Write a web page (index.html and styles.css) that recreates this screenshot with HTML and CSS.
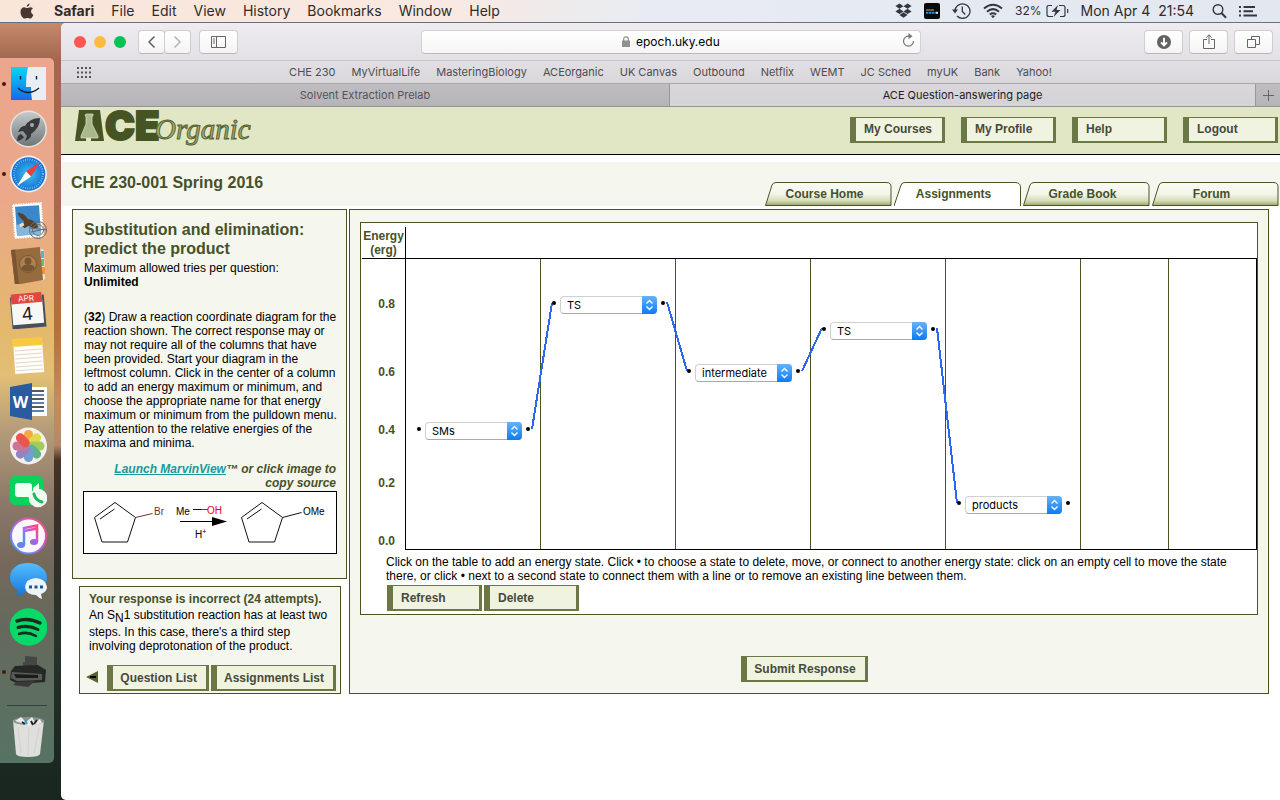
FILE: index.html
```html
<!DOCTYPE html>
<html lang="en">
<head>
<meta charset="utf-8">
<title>ACE Question-answering page</title>
<link rel="stylesheet" href="styles.css">
</head>
<body>
<header class="menubar">
  <svg class="apple" width="14" height="16" viewBox="0 0 14 16" aria-label="Apple"><path fill="#4a3630" d="M9.6 0.4c0.1 1.7-1.3 3.3-2.9 3.3C6.500 2.200 8 0.600 9.600 0.400zM12.900 5.400c-1.300 0.800-1.900 1.800-1.800 3.100 0 1.500 0.900 2.600 2.300 3.200-0.600 1.800-1.800 3.800-3.200 3.800-1 0-1.500-0.600-2.700-0.600s-1.700 0.600-2.700 0.600C2.700 15.500 0.500 12 0.500 8.900c0-3 1.900-4.600 3.700-4.600 1.200 0 2.200 0.800 2.900 0.800s1.900-0.900 3.300-0.900c1 0 1.900 0.400 2.500 1.200z"/></svg>
  <nav class="menus"><b>Safari</b><span>File</span><span>Edit</span><span>View</span><span>History</span><span>Bookmarks</span><span>Window</span><span>Help</span></nav>
  <div class="status">
    <svg width="17" height="16" viewBox="0 0 17 16" fill="#333840"><path d="M4.500 0.500L8.500 3.200 4.400 5.800 0.400 3.100zM12.500 0.500L8.500 3.200l4.100 2.600 4-2.700zM0.400 8.500l4-2.700 4.100 2.600-4 2.600zM16.600 8.500l-4-2.700-4.100 2.600 4 2.600zM4.500 12l4-2.700 4 2.700-4 2.700z"/></svg>
    <svg width="16" height="16" viewBox="0 0 16 16"><rect width="16" height="16" rx="2" fill="#07090b"/><path d="M2 7h8" stroke="#777" stroke-width="1.500"/><path d="M2 9.800h9" stroke="#1496e0" stroke-width="2" stroke-dasharray="2.500 .5"/><path d="M11.500 9.800h2.500" stroke="#ddd" stroke-width="2"/></svg>
    <svg width="19" height="16" viewBox="0 0 19 16" fill="none" stroke="#333840"><path stroke-width="1.300" d="M3 8.500A7.500 7.200 0 1 1 5 13"/><path d="M0 6.500h6L3 10.500z" fill="#333840" stroke="none"/><path stroke-width="1.300" d="M10.300 3.500v5l3 3"/></svg>
    <svg width="20" height="16" viewBox="0 0 20 16" fill="none" stroke="#333840" stroke-width="2"><path d="M1 5.500Q10-2 19 5.500M4 8.700Q10 3.500 16 8.700M6.800 11.500Q10 9 13.200 11.500"/><path d="M8 13l2 2.300 2-2.300q-2-1.500-4 0z" fill="#333840" stroke="none"/></svg>
    <span class="battery"><small>32%</small>
    <svg width="23" height="14" viewBox="0 0 23 14" fill="none" stroke="#333840" stroke-width="1.200"><path d="M6 1.500H3Q1 1.500 1 3.500v7q0 2 2 2h4M13 1.500h4q2 0 2 2v7q0 2-2 2h-3"/><path d="M21.700 5v4"/><path d="M12 1L5.500 7.700h4L7.500 13l7-7h-4z" fill="#333840" stroke="none"/></svg></span>
    <time>Mon Apr 4&nbsp; 21:54</time>
    <svg width="15" height="16" viewBox="0 0 15 16" fill="none" stroke="#333840"><circle cx="6" cy="6.500" r="4.800" stroke-width="1.400"/><path d="M9.500 10l4.500 4.700" stroke-width="2"/></svg>
    <svg width="18" height="14" viewBox="0 0 18 14" stroke="#333840" stroke-width="2"><path d="M4.500 3H16M4.500 7.200H14M4.500 11.500H18M0 3h2M0 7.200h2M0 11.500h2"/></svg>
  </div>
</header>
<div class="desktop">
  <aside class="dock" aria-label="Dock">
    <ul class="apps">
      <li class="running"><svg viewBox="0 0 38 38"><defs><linearGradient id="fa" x2="0" y2="1"><stop stop-color="#08d4fb"/><stop offset="1" stop-color="#1769e8"/></linearGradient></defs><path fill="url(#fa)" d="M2 2h35v33H2z"/><path fill="#e9eef4" d="M18.500 2H37v33H23q-1-5-1-13h-5Q17 10 19 2z"/><path d="M11.500 11v3.500M27.500 11v3.500M9 23q10 9 21 0" fill="none" stroke="#102030" stroke-width="1.400"/></svg></li>
      <li><svg viewBox="0 0 38 38"><defs><linearGradient id="la" x2="0" y2="1"><stop stop-color="#c5c9c9"/><stop offset="1" stop-color="#707778"/></linearGradient></defs><circle cx="19.500" cy="19" r="18.500" fill="#e4e4e2"/><circle cx="19.500" cy="19" r="17" fill="url(#la)"/><path fill="#37383a" d="M31 8q-10 0-15 8-4-1-7 6l5-1 4 5-2 5q7-3 6-7 9-6 9-16zM12 24q-4 1-4 7 5-1 7-4z"/><circle cx="23" cy="15" r="2" fill="#aaa"/></svg></li>
      <li class="running"><svg viewBox="0 0 38 38"><defs><radialGradient id="sa"><stop stop-color="#3ac5ef"/><stop offset="1" stop-color="#176dd3"/></radialGradient></defs><circle cx="19.500" cy="19" r="18.500" fill="#edf0f1"/><circle cx="19.500" cy="19" r="16.800" fill="url(#sa)"/><circle cx="19.500" cy="19" r="14.500" fill="none" stroke="#8ed7f4" stroke-width="2" stroke-dasharray=".7 1.600"/><path fill="#f43b35" d="M31 7L17 16.500l5 5z"/><path fill="#fff" d="M8 31l9-14.500 5 5z"/></svg></li>
      <li><svg viewBox="0 0 38 38"><g transform="rotate(-4 19 19)"><path fill="#fff" stroke="#fff" stroke-width="2" stroke-dasharray="1.500 1" d="M5 3h28v33H5z"/><path fill="#3c87c8" d="M7 5h24v29H7z"/><path fill="#83b7dd" d="M7 23h24v11H7z"/><path fill="#59402b" d="M9 11q6 0 10 7 8 2 10 9l-5 1-5-3-4 2-3-3 3-4q-5-4-6-9z"/><path fill="#e7dcc5" d="M10 23l4-2 1 3-4 2z"/></g><circle cx="29" cy="29" r="8.500" fill="none" stroke="#766e61"/><circle cx="29" cy="29" r="5.500" fill="none" stroke="#766e61"/><path stroke="#596b7b" d="M21 27l17 2M22 31l14-3"/></svg></li>
      <li><svg viewBox="0 0 38 38"><path fill="#e8e3d3" d="M30 2l5 2 1 29-3 2z"/><path fill="#4cb7dd" d="M32 5h3v7h-3z"/><path fill="#6ac168" d="M32 13h3v7h-3z"/><path fill="#ef9934" d="M33 21h3v7h-3z"/><path fill="#966b3e" d="M2 4l29-3 3 33-28 5z"/><path fill="#795532" d="M2 4l4-.5L10 38l-4 1z"/><circle cx="19" cy="18" r="8.500" fill="#ad8051" stroke="#795532"/><circle cx="19" cy="15" r="3.500" fill="#795532"/><path fill="#795532" d="M12 23q1-4 7-5 6 1 7 4-6 7-14 1z"/></svg></li>
      <li><svg viewBox="0 0 38 38"><g transform="rotate(-5 19 19)"><path fill="#44515c" d="M2 5h34v32H2z"/><path fill="#f7f7f5" d="M3 2h31v31H3z"/><path fill="#df4740" d="M3 2h31v10H3z"/><text x="18" y="10" class="cal-month">APR</text><text x="18" y="29" class="cal-day">4</text></g></svg></li>
      <li><svg viewBox="0 0 38 38"><g transform="rotate(-4 19 19)"><path fill="#fffef7" d="M5 3h29v34H5z"/><path fill="#f8ca40" d="M4 2h30v8H4z"/><path stroke="#ddd8ca" d="M6 14h27M6 18h27M6 22h27M6 26h27M6 30h27M6 34h27"/></g></svg></li>
      <li><svg viewBox="0 0 38 38"><path fill="#fff" d="M22 5h16v29H22z"/><path d="M23 9h12M23 17h12M23 25h12" stroke="#222" stroke-width="1.300"/><path d="M23 13h12M23 21h12M23 29h12" stroke="#2b5797" stroke-width="1.300"/><path fill="#2a5a9f" d="M1 5l22-4v37L1 34z"/><text x="11.500" y="26" class="word-letter">W</text></svg></li>
      <li><svg viewBox="0 0 38 38"><circle cx="19.500" cy="19" r="18.500" fill="#f2f1ed"/><g opacity=".9"><rect x="15" y="3" width="9" height="16" rx="4.500" fill="#f5a12c"/><rect x="15" y="3" width="9" height="16" rx="4.500" fill="#dfd83c" transform="rotate(45 19.500 19)"/><rect x="15" y="3" width="9" height="16" rx="4.500" fill="#9bc64d" transform="rotate(90 19.500 19)"/><rect x="15" y="3" width="9" height="16" rx="4.500" fill="#51ac83" transform="rotate(135 19.500 19)"/><rect x="15" y="3" width="9" height="16" rx="4.500" fill="#6695cf" transform="rotate(180 19.500 19)"/><rect x="15" y="3" width="9" height="16" rx="4.500" fill="#8a78b9" transform="rotate(225 19.500 19)"/><rect x="15" y="3" width="9" height="16" rx="4.500" fill="#ca658f" transform="rotate(270 19.500 19)"/><rect x="15" y="3" width="9" height="16" rx="4.500" fill="#e9453f" transform="rotate(315 19.500 19)"/></g></svg></li>
      <li><svg viewBox="0 0 38 38"><rect x="1" y="4" width="33" height="29" rx="5" fill="#0bd259"/><rect x="6" y="11" width="17" height="14" rx="3" fill="#effff4"/><path fill="#effff4" d="M24 16l6-5v14l-6-4z"/><circle cx="29" cy="26" r="9.300" fill="#f5f7f5"/><path fill="none" stroke="#12bf54" stroke-width="3" stroke-linecap="round" d="M25 22q1 6 8 8"/></svg></li>
      <li><svg viewBox="0 0 38 38"><defs><linearGradient id="ia" x1="1" x2="0" y2="1"><stop stop-color="#ff4b69"/><stop offset=".5" stop-color="#bb62e8"/><stop offset="1" stop-color="#29a7f6"/></linearGradient></defs><circle cx="19.500" cy="19" r="17.500" fill="#faf8fb" stroke="url(#ia)" stroke-width="2"/><path fill="none" stroke="url(#ia)" stroke-width="2.500" d="M15 28V11l13-2.500V25M15 14l13-2.500"/><ellipse cx="12" cy="28" rx="4" ry="3" fill="#6783ee"/><ellipse cx="25" cy="25" rx="4" ry="3" fill="#a065dc"/></svg></li>
      <li><svg viewBox="0 0 38 38"><defs><linearGradient id="ma" x2="0" y2="1"><stop stop-color="#55bdff"/><stop offset="1" stop-color="#1576db"/></linearGradient></defs><path fill="url(#ma)" d="M19 1C8 1 1 7 1 16q0 8 8 12-1 4-2 6 7-1 9-4 21 2 22-14C38 7 29 1 19 1z"/><path fill="#edf4f8" d="M27 16q-11 1-11 9 1 8 11 8 3 3 6 4l-1-5q6-2 6-7-1-8-11-9z"/><path stroke="#165394" stroke-width="3" stroke-dasharray="3 2.500" d="M20 25h15"/></svg></li>
      <li><svg viewBox="0 0 38 38"><circle cx="19.500" cy="19" r="18.800" fill="#08d968"/><path fill="none" stroke="#182b20" stroke-linecap="round" stroke-width="3.500" d="M8 13q11-4 23 2"/><path fill="none" stroke="#182b20" stroke-linecap="round" stroke-width="3" d="M9 19.500q10-3 20 2"/><path fill="none" stroke="#182b20" stroke-linecap="round" stroke-width="2.500" d="M10 26q8-3 17 2"/></svg></li>
      <li class="running"><svg viewBox="0 0 38 38"><path fill="#464645" d="M16 3l12 1v10H14V9h2z"/><path fill="#262727" d="M6 13l23-1 8 5-1 12-27 2-8-4 1-9z"/><path fill="#595a58" d="M3 19l30 2v6L8 28l-6-3z"/><path fill="#1a1b1b" d="M5 21l24 1v3L7 25z"/><path fill="#393a38" d="M8 29l18-1-7 6-15-2z"/></svg></li>
    </ul>
    <hr class="dock-rule">
    <svg class="trash" width="38" height="42" viewBox="0 0 38 42"><path fill="#dedfdd" d="M4 4h31l-4 34q-1 3-12 3T7 38z"/><ellipse cx="19.500" cy="5" rx="15.500" ry="4" fill="#8e918f"/><path fill="#ebeae6" d="M6 5l6-4 5 5 6-5 3 5 5-3 2 4-12 3z"/><path d="M13 6l3 2M22 5l2 4M28 4l-3 4" stroke="#222" stroke-width="2"/><path d="M16 4l2 4" stroke="#2a9fbf" stroke-width="2"/><path d="M9 12l3 26M20 12l-1 28M30 12l-5 26" stroke="#d0d2d0"/></svg>
  </aside>
  <main class="window">
    <div class="toolbar">
      <div class="controls">
        <div class="lights"><button class="red" aria-label="Close"></button><button class="yellow" aria-label="Minimize"></button><button class="green" aria-label="Zoom"></button></div>
        <div class="history"><button class="tool half" aria-label="Back"><svg width="9" height="14" viewBox="0 0 9 14"><path d="M7.500 1.500L2 7l5.500 5.500" fill="none" stroke="#606060" stroke-width="1.500"/></svg></button><button class="tool half" aria-label="Forward"><svg width="9" height="14" viewBox="0 0 9 14"><path d="M1.500 1.500L7 7l-5.500 5.500" fill="none" stroke="#b5b5b5" stroke-width="1.500"/></svg></button></div>
        <button class="tool" aria-label="Show sidebar"><svg width="15" height="12" viewBox="0 0 15 12" fill="none" stroke="#666"><path d="M.5.5h14v11H.5zM5.500.5v11M2 3h2M2 5h2M2 7h2"/></svg></button>
      </div>
      <div class="address"><label class="url"><svg width="8" height="11" viewBox="0 0 8 11"><path fill="#909090" d="M0 4.500h8V11H0z"/><path d="M1.700 5V3q0-2.200 2.300-2.200T6.300 3v2" fill="none" stroke="#909090" stroke-width="1.200"/></svg><input value="epoch.uky.edu" aria-label="Address"></label><button class="reload" aria-label="Reload"><svg width="13" height="15" viewBox="0 0 13 15"><path d="M7 3.200A5 5 0 1 0 11.500 8" fill="none" stroke="#777" stroke-width="1.200"/><path fill="#777" d="M6.500 0l4 3.200-4 3z"/></svg></button></div>
      <div class="actions">
        <button class="tool" aria-label="Downloads"><svg width="14" height="14" viewBox="0 0 14 14"><circle cx="7" cy="7" r="7" fill="#626262"/><path d="M7 2.800V10M4 7.300l3 3 3-3" fill="none" stroke="#fff" stroke-width="1.900"/></svg></button>
        <button class="tool" aria-label="Share"><svg width="12" height="15" viewBox="0 0 12 15" fill="none" stroke="#666"><path d="M4 5.500H.5v9h11v-9H8M6 10V1M3.200 3.500L6 .8l2.800 2.700"/></svg></button>
        <button class="tool" aria-label="Show all tabs"><svg width="13" height="12" viewBox="0 0 13 12" fill="none" stroke="#666"><path d="M.5 3.500h8v8h-8zM4.500 3V.5h8v8H9"/></svg></button>
      </div>
    </div>
    <div class="favorites">
      <svg class="grid-icon" width="14" height="11" viewBox="0 0 14 11" stroke="#555" stroke-width="2"><path stroke-dasharray="2 2" d="M0 1h14M0 5.500h14M0 10h14"/></svg>
      <nav class="links"><a href="#">CHE 230</a><a href="#">MyVirtualLife</a><a href="#">MasteringBiology</a><a href="#">ACEorganic</a><a href="#">UK Canvas</a><a href="#">Outbound</a><a href="#">Netflix</a><a href="#">WEMT</a><a href="#">JC Sched</a><a href="#">myUK</a><a href="#">Bank</a><a href="#">Yahoo!</a></nav>
    </div>
    <div class="browser-tabs"><button class="btab">Solvent Extraction Prelab</button><button class="btab current">ACE Question-answering page</button><button class="new-tab" aria-label="New tab"><svg width="11" height="11" viewBox="0 0 11 11"><path d="M5.500 0v11M0 5.500h11" stroke="#666"/></svg></button></div>

    <header class="site-head">
      <svg class="logo" width="184" height="46" viewBox="0 0 184 46" role="img" aria-label="ACE Organic">
        <path fill="#465322" d="M4 3h21l4 31H16V28H11V34H0z"/>
        <path fill="#abb78c" stroke="#e1e6c5" stroke-width=".7" d="M11 7h7v2h-1v8l6 12v2H6v-2l5-12V9h-1z"/>
        <text x="30" y="33" class="logo-main">CE</text>
        <text x="80" y="32" class="logo-script">Organic</text>
      </svg>
      <nav class="site-nav"><button class="btn wide">My Courses</button><button class="btn wide">My Profile</button><button class="btn wide">Help</button><button class="btn wide">Logout</button></nav>
    </header>
    <div class="course-bar">
      <h1>CHE 230-001 Spring 2016</h1>
      <svg class="defs" width="0" height="0" aria-hidden="true"><defs><linearGradient id="tabfill" x2="0" y2="1"><stop stop-color="#fafbf5"/><stop offset=".5" stop-color="#f3f5e8"/><stop offset=".8" stop-color="#d5dcb7"/><stop offset="1" stop-color="#9aa66a"/></linearGradient></defs></svg>
      <nav class="course-tabs">
        <a href="#"><svg viewBox="0 0 127 24"><path d="M.5 23.500L7 3Q8 .5 11 .5h110q5 0 5 4v19z" fill="url(#tabfill)" stroke="#4a5526"/></svg><span>Course Home</span></a>
        <a href="#"><svg viewBox="0 0 127 24"><path d="M0 24L7 3Q8 .5 11 .5h110q5 0 5.500 4V24" fill="#fff" stroke="#4a5526"/></svg><span>Assignments</span></a>
        <a href="#"><svg viewBox="0 0 127 24"><path d="M.5 23.500L7 3Q8 .5 11 .5h110q5 0 5 4v19z" fill="url(#tabfill)" stroke="#4a5526"/></svg><span>Grade Book</span></a>
        <a href="#"><svg viewBox="0 0 127 24"><path d="M.5 23.500L7 3Q8 .5 11 .5h110q5 0 5 4v19z" fill="url(#tabfill)" stroke="#4a5526"/></svg><span>Forum</span></a>
      </nav>
    </div>
    <div class="columns">
      <div class="side">
        <section class="question">
          <h2>Substitution and elimination: predict the product</h2>
          <p class="tries">Maximum allowed tries per question: <b>Unlimited</b></p>
          <p class="prompt">(<b>32</b>) Draw a reaction coordinate diagram for the reaction shown. The correct response may or may not require all of the columns that have been provided. Start your diagram in the leftmost column. Click in the center of a column to add an energy maximum or minimum, and choose the appropriate name for that energy maximum or minimum from the pulldown menu. Pay attention to the relative energies of the maxima and minima.</p>
          <p class="marvin"><a href="#">Launch MarvinView</a>™ or click image to copy source</p>
          <svg class="reaction" viewBox="0 0 252 61" role="img" aria-label="Reaction scheme">
            <defs><g id="ring" fill="none" stroke="#111"><path d="M31 10.500L10.500 25.500 18 50H43.500L51.500 25.500zM30.500 17L16 27"/></g></defs>
            <use href="#ring"/><use href="#ring" x="147"/>
            <path d="M51.500 25.500l17-4" stroke="#713036"/><text x="70" y="23" fill="#713036">Br</text>
            <text x="92" y="23">Me</text><path d="M109 17.500h8" stroke="#111"/><path d="M117 17.500h7" stroke="#e8001c"/><text x="123" y="22" fill="#e8001c">OH</text>
            <path d="M96 29.500h34" stroke="#000"/><path d="M128 25v9l15-4.500z"/>
            <text x="111" y="46">H<tspan dy="-4" font-size="7">+</tspan></text>
            <path d="M198.500 25.500l19-5" stroke="#111"/><text x="219" y="23">OMe</text>
          </svg>
        </section>
        <section class="feedback">
          <h3>Your response is incorrect (24 attempts).</h3>
          <p>An S<sub>N</sub>1 substitution reaction has at least two steps. In this case, there's a third step involving deprotonation of the product.</p>
          <div class="feedback-nav"><a href="#" aria-label="Previous question"><svg width="12" height="12" viewBox="0 0 12 12"><path fill="#59652f" d="M0 6L12 0v12z"/><path d="M4 6h6" stroke="#000" stroke-width="2"/></svg></a><div class="pair"><button class="btn">Question List</button><button class="btn">Assignments List</button></div></div>
        </section>
      </div>
      <section class="answer">
        <div class="diagram">
          <div class="chart">
            <div class="axis-title">Energy<br>(erg)</div><div class="chart-head"></div>
            <div class="scale"><span>0.8</span><span>0.6</span><span>0.4</span><span>0.2</span><span>0.0</span></div>
            <div class="plot">
              <i></i><i></i><i></i><i></i><i></i><i></i><i></i>
              <svg class="lines" width="675" height="290" viewBox="0 0 675 290" fill="none" stroke="#2c67f3" stroke-width="2" shape-rendering="crispEdges"><path d="M126 170L146 44M261 43L281 112M396 112L416 69M531 69L551 244"/></svg>
              <div class="state s1"><button aria-label="State 1 left"></button><label><select aria-label="State 1"><option>SMs</option></select><svg viewBox="0 0 15 18"><use href="#arrows"/></svg></label><button aria-label="State 1 right"></button></div>
              <div class="state s2"><button aria-label="State 2 left"></button><label><select aria-label="State 2"><option>TS</option></select><svg viewBox="0 0 15 18"><use href="#arrows"/></svg></label><button aria-label="State 2 right"></button></div>
              <div class="state s3"><button aria-label="State 3 left"></button><label><select aria-label="State 3"><option>intermediate</option></select><svg viewBox="0 0 15 18"><use href="#arrows"/></svg></label><button aria-label="State 3 right"></button></div>
              <div class="state s4"><button aria-label="State 4 left"></button><label><select aria-label="State 4"><option>TS</option></select><svg viewBox="0 0 15 18"><use href="#arrows"/></svg></label><button aria-label="State 4 right"></button></div>
              <div class="state s5"><button aria-label="State 5 left"></button><label><select aria-label="State 5"><option>products</option></select><svg viewBox="0 0 15 18"><use href="#arrows"/></svg></label><button aria-label="State 5 right"></button></div>
            </div>
          </div>
          <svg class="defs" width="0" height="0" aria-hidden="true"><defs><linearGradient id="blue" x2="0" y2="1"><stop stop-color="#67b2f8"/><stop offset="1" stop-color="#0a7cf6"/></linearGradient><g id="arrows"><path fill="url(#blue)" d="M0 0h11q4 0 4 4v10q0 4-4 4H0z"/><path fill="none" stroke="#fff" stroke-width="1.400" d="M4.500 7.500l3-3 3 3M4.500 10.500l3 3 3-3"/></g></defs></svg>
          <p class="help">Click on the table to add an energy state. Click • to choose a state to delete, move, or connect to another energy state: click on an empty cell to move the state there, or click • next to a second state to connect them with a line or to remove an existing line between them.</p>
          <div class="pair diagram-actions"><button class="btn wide">Refresh</button><button class="btn wide">Delete</button></div>
        </div>
        <button class="btn submit">Submit Response</button>
      </section>
    </div>
  </main>
</div>
</body>
</html>
```
FILE: styles.css
```css
* { box-sizing: border-box; }
body {
  margin: 0;
  min-height: 100vh;
  display: flex;
  flex-direction: column;
  font: 12px/14px "Liberation Sans", Arial, sans-serif;
  color: #000;
  background: linear-gradient(#c68b6c 22px, #a0684f 60px, #a96b4e 220px, #b5703c 330px, #c08d62 400px, #b48969 445px, #473425 460px, #35302a 530px, #25332b 640px, #19251f 800px);
}
h1, h2, h3, p, ul { margin: 0; padding: 0; }
button { font: inherit; color: inherit; border: 0; padding: 0; background: none; }
.defs { position: absolute; }

.menubar {
  display: flex;
  align-items: center;
  height: 23px;
  padding: 0 23px 0 20px;
  border-bottom: 1px solid #69707f;
  background: linear-gradient(90deg, #fae5d9, #f8e9e2 35%, #e8ecf2 50%, #e3e7f0);
  font: 14px/22px Inter, sans-serif;
  color: #302b2b;
}
.menus { display: flex; gap: 17px; margin-left: 20px; }
.status { display: flex; align-items: center; gap: 12px; margin-left: auto; }
.status time { margin-right: 6px; }
.battery { display: flex; align-items: center; gap: 4px; }
.battery small { font-size: 12px; }

.desktop { display: flex; flex: 1; }
.dock {
  display: flex;
  flex-direction: column;
  width: 54px;
  margin: 35px 7px 37px 0;
  padding: 7px 7px 5px 9px;
  border-radius: 0 5px 5px 0;
  background: linear-gradient(#eba68d, #eba88a 20%, #e4b86d 38%, #e2bf74 45%, #b39b79 53%, #8b7969 63%, #74685b 72%, #66695c 80%, #567364);
}
.apps { display: flex; flex: 1; flex-direction: column; justify-content: space-between; list-style: none; }
.apps li { position: relative; height: 38px; }
.apps svg { display: block; width: 38px; height: 38px; }
.running::before { content: ""; position: absolute; left: -7px; top: 17px; width: 4px; height: 4px; border-radius: 50%; background: #471a09; }
.dock-rule { width: 40px; margin: 14px 0 10px -2px; border: 0; border-top: 1px solid #30423a; }
.trash { display: block; }
.cal-month { font: 8px Inter, sans-serif; fill: #fff; text-anchor: middle; }
.cal-day { font: 18px Inter, sans-serif; fill: #222; text-anchor: middle; }
.word-letter { font: bold 16px "Open Sans", sans-serif; fill: #fff; text-anchor: middle; }

.window { flex: 1; min-width: 0; background: #fff; border-radius: 5px 0 0 5px; overflow: hidden; }
.toolbar {
  display: grid;
  grid-template-columns: 1fr minmax(0, 500px) 1fr;
  align-items: center;
  height: 38px;
  padding: 0 7px 0 13px;
  border-bottom: 1px solid #c8c5c9;
  background: linear-gradient(#eeecef, #e3e1e5);
}
.controls { display: flex; align-items: center; }
.lights { display: flex; gap: 8px; margin-right: 12px; }
.lights button { width: 12px; height: 12px; border-radius: 50%; }
.red { background: #fc5753; }
.yellow { background: #fdbc40; }
.green { background: #08c253; }
.history { display: flex; margin-right: 8px; }
.tool { display: flex; align-items: center; justify-content: center; width: 39px; height: 24px; border: 1px solid #cfcdd0; border-bottom-color: #b9b7ba; border-radius: 4px; background: linear-gradient(#fff, #f4f4f4); }
.tool.half { width: 27px; }
.half + .half { margin-left: -1px; }
.address { display: flex; align-items: center; height: 24px; margin: 0 3px 0 -3px; padding-right: 5px; border: 1px solid #d2d0d3; border-bottom-color: #bbb9bc; border-radius: 4px; background: linear-gradient(#fff, #f5f5f5); }
.url { display: flex; flex: 1; align-items: center; justify-content: center; gap: 6px; padding-left: 20px; }
.url input { width: 85px; padding: 0; border: 0; background: none; font: 12px/16px Inter, sans-serif; color: #000; }
.actions { display: flex; justify-content: flex-end; gap: 6px; }
.favorites { display: flex; align-items: center; height: 23px; padding: 0 16px; border-bottom: 1px solid #aaa8ab; background: linear-gradient(#e1dfe3, #d9d7da); }
.links { display: flex; flex: 1; justify-content: center; gap: 16px; margin-right: 14px; font: 11px/16px Inter, sans-serif; }
.links a { color: #504c50; text-decoration: none; }
.browser-tabs { display: grid; grid-template-columns: 608fr 587fr 24px; height: 23px; border-bottom: 1px solid #96949b; background: linear-gradient(#bfbdc1, #b6b4b8); font: 11px/20px Inter, sans-serif; color: #565358; }
.btab.current { background: linear-gradient(#d9d7db, #d5d3d7); color: #222; border: solid #99979b; border-width: 0 1px; }
.new-tab { display: flex; align-items: center; justify-content: center; }

.site-head { display: flex; align-items: center; justify-content: space-between; height: 48px; padding: 0 2px 2px 14px; border-bottom: 1px solid #000; background: #e1e6c5; }
.logo-main { font: 900 40px Inter, sans-serif; fill: #465322; stroke: #465322; stroke-width: 2px; }
.logo-script { font: italic 29px "Liberation Serif", serif; fill: #a2ac75; stroke: #56632f; stroke-width: 1px; }
.site-nav { display: flex; gap: 16px; }
.btn { height: 26px; padding: 0 9px 0 7px; border: solid #6b7745; border-width: 1px 3px 2px 6px; background: #eff3e0; color: #474a3b; font-weight: bold; text-align: left; white-space: nowrap; }
.btn.wide { width: 95px; padding-left: 8px; }
.course-bar { display: flex; align-items: flex-end; justify-content: space-between; height: 44px; margin: 7px 0 3px; padding: 0 1px 0 10px; background: #f5f6ee; }
.course-bar h1 { align-self: center; padding-bottom: 2px; font-size: 16px; line-height: 20px; color: #46512a; }
.course-tabs { display: flex; gap: 2px; }
.course-tabs a { display: grid; width: 127px; height: 24px; color: #46512a; font-weight: bold; text-align: center; text-decoration: none; }
.course-tabs svg, .course-tabs span { grid-area: 1 / 1; }
.course-tabs svg { width: 100%; height: 24px; }
.course-tabs span { z-index: 1; padding-right: 8px; line-height: 24px; }

.columns { display: flex; align-items: stretch; gap: 2px; padding: 0 11px; }
.side { display: flex; flex-direction: column; flex: 0 0 275px; }
.question { flex: 1; padding: 10px 9px 24px 11px; border: 1px solid #485421; background: #f5f6ee; }
.question h2 { margin-bottom: 3px; font-size: 16px; line-height: 19px; color: #46512a; }
.tries { max-width: 220px; }
.prompt { margin-top: 21px; }
.marvin { margin: 12px 1px 0 20px; text-align: right; font-weight: bold; font-style: italic; color: #46512a; }
.marvin a { color: #179a98; }
.reaction { display: block; width: 254px; height: 63px; margin: 1px 0 0 -1px; border: 1px solid #000; background: #fff; font-size: 10px; }
.feedback { margin: 7px 6px 0 7px; padding: 5px 4px 2px 9px; border: 1px solid #485421; background: #f5f6ee; }
.feedback h3 { font-size: 12px; line-height: 14px; color: #46512a; }
.feedback p { margin-top: 2px; }
.feedback sub { font-size: 12px; }
.feedback-nav { display: flex; align-items: center; justify-content: space-between; margin: 12px 0 0 -3px; }
.pair { display: flex; gap: 2px; }
.answer { display: flex; flex-direction: column; align-items: center; flex: 1; min-width: 0; padding: 12px 10px 11px; border: 1px solid #485421; background: #f5f6ee; }
.diagram { align-self: stretch; padding: 4px 0 3px 1px; border: 1px solid #485421; background: #fff; }
.chart { display: grid; grid-template-columns: 43px 1fr; }
.axis-title { height: 32px; padding-top: 2px; border-bottom: 1px solid #000; text-align: center; font-weight: bold; color: #46512a; }
.chart-head { border-left: 1px solid #000; border-bottom: 1px solid #000; }
.scale { display: grid; grid-template-rows: 52px 68px 58px 53px 58px; align-items: end; justify-items: end; padding-right: 10px; font-weight: bold; color: #46512a; }
.plot { position: relative; display: grid; grid-template-columns: repeat(5, 135px) 1fr 1fr; height: 291px; border-left: 1px solid #000; border-bottom: 1px solid #000; }
.plot i { border-right: 1px solid #485421; }
.plot i:nth-child(7) { border-color: #000; }
.lines { position: absolute; left: 0; top: 0; }
.state { position: absolute; display: flex; gap: 4px; }
.state button { width: 4px; height: 4px; margin-top: 5px; border-radius: 50%; background: #000; }
.state label { position: relative; width: 97px; height: 18px; }
.state select { appearance: none; width: 97px; height: 18px; padding: 0 16px 0 6px; border: 1px solid #d0d0d0; border-bottom-color: #aaa; border-radius: 4px; background: #fff; color: #000; font: 11px/16px Inter, sans-serif; }
.state svg { position: absolute; right: 0; top: 0; width: 15px; height: 18px; pointer-events: none; }
.s1 { left: 11px; top: 163px; }
.s2 { left: 146px; top: 37px; }
.s3 { left: 281px; top: 105px; }
.s4 { left: 416px; top: 63px; }
.s5 { left: 551px; top: 237px; }
.help { margin: 5px 10px 2px 24px; }
.diagram-actions { margin-left: 25px; }
.submit { margin: 41px 9px 0 0; }
```
